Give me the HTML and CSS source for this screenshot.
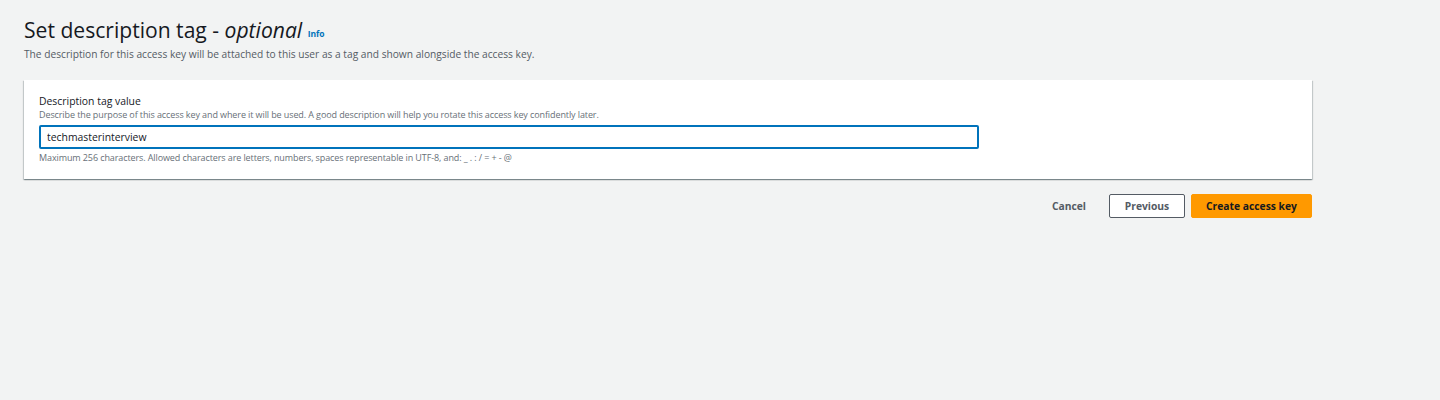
FILE: index.html
```html
<!DOCTYPE html>
<html lang="en">
<head>
<meta charset="utf-8">
<title>Set description tag</title>
<link rel="stylesheet" href="styles.css">
</head>
<body>
<main class="page">
  <header class="page-header">
    <h1 class="title">Set description tag - <em>optional</em> <a class="info" href="#">Info</a></h1>
    <p class="subtitle">The description for this access key will be attached to this user as a tag and shown alongside the access key.</p>
  </header>
  <section class="card">
    <label class="label" for="desc">Description tag value</label>
    <p class="hint">Describe the purpose of this access key and where it will be used. A good description will help you rotate this access key confidently later.</p>
    <input id="desc" class="input" type="text" value="techmasterinterview">
    <p class="constraint">Maximum 256 characters. Allowed characters are letters, numbers, spaces representable in UTF-8, and: _ . : / = + - @</p>
  </section>
  <div class="actions">
    <button class="btn btn-link" type="button">Cancel</button>
    <button class="btn btn-normal" type="button">Previous</button>
    <button class="btn btn-primary" type="button">Create access key</button>
  </div>
</main>
</body>
</html>
```
FILE: styles.css
```css
* { box-sizing: border-box; }
html, body { margin: 0; padding: 0; }
body {
  background: #f2f3f3;
  font-family: "Open Sans", "Liberation Sans", sans-serif;
  color: #16191f;
  width: 1440px;
  height: 400px;
}
.page {
  width: 1288px;
  margin-left: 24px;
  padding-top: 16px;
}
.title {
  margin: 0;
  height: 28px;
  font-size: 21.1px;
  font-weight: 400;
  line-height: 28px;
  color: #16191f;
}
.title em { font-style: italic; }
.info {
  font-size: 8.5px;
  line-height: 10px;
  font-weight: 700;
  color: #0073bb;
  text-decoration: none;
  vertical-align: 1px;
}
.subtitle {
  margin: 2px 0 0;
  font-size: 10.2px;
  line-height: 16px;
  color: #545b64;
}
.card {
  margin-top: 18px;
  background: #fff;
  box-shadow: 0 1px 1px 0 rgba(0,28,36,.3), 1px 1px 1px 0 rgba(0,28,36,.15), -1px 1px 1px 0 rgba(0,28,36,.15);
  padding: 14px 15px 14px;
  height: 99px;
}
.label {
  display: block;
  font-size: 10.4px;
  line-height: 14px;
  color: #16191f;
}
.hint {
  margin: 1px 0 0;
  font-size: 9px;
  line-height: 12px;
  color: #687078;
  letter-spacing: -0.1px;
}
.input {
  display: block;
  margin-top: 4px;
  width: 940px;
  height: 24px;
  border: 2px solid #0073bb;
  border-radius: 2px;
  padding: 0 6px;
  font-family: inherit;
  font-size: 10.4px;
  color: #16191f;
  outline: none;
}
.constraint {
  margin: 3px 0 0;
  font-size: 9px;
  line-height: 12px;
  color: #687078;
  letter-spacing: -0.1px;
}
.actions {
  display: flex;
  justify-content: flex-end;
  align-items: center;
  gap: 6px;
  margin-top: 15px;
}
.btn {
  font-family: inherit;
  font-size: 10.3px;
  font-weight: 700;
  height: 24px;
  padding: 0;
  border-radius: 2px;
  cursor: pointer;
}
.btn-link {
  background: transparent;
  border: 1px solid transparent;
  color: #545b64;
  padding: 0 16px;
}
.btn-normal {
  background: #fff;
  border: 1px solid #545b64;
  color: #545b64;
  width: 76px;
}
.btn-primary {
  background: #ff9900;
  border: 1px solid #ff9900;
  color: #16191f;
  width: 121px;
}
```
